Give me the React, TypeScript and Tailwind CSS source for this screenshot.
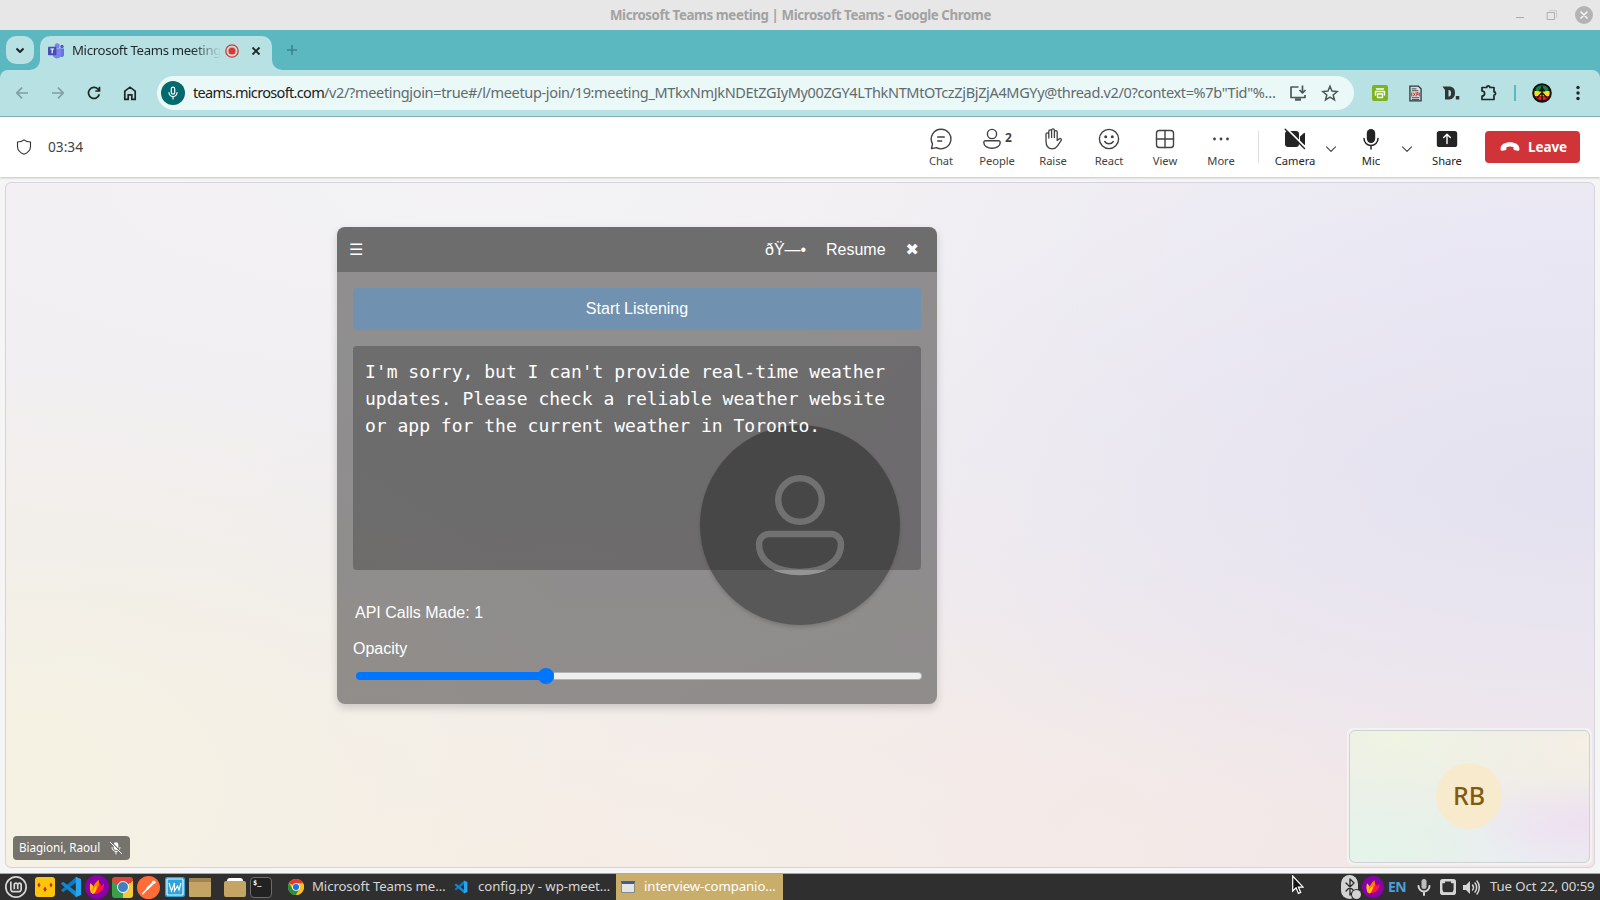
import React from "react";
import { SiLinuxmint } from "react-icons/si";

type Box = { children: React.ReactNode; className?: string; viewBox?: string };

function Svg({ children, className = "w-6 h-6", viewBox = "0 0 24 24" }: Box) {
  return (
    <svg viewBox={viewBox} className={`shrink-0 ${className}`} fill="none" stroke="currentColor" strokeWidth="1.4" strokeLinecap="round" strokeLinejoin="round">
      {children}
    </svg>
  );
}

function Cell({ children, className }: { children?: React.ReactNode; className: string }) {
  return <div className={`flex shrink-0 items-center justify-center ${className}`}>{children}</div>;
}

function ChromeLogo({ className }: { className: string }) {
  return (
    <svg viewBox="0 0 24 24" className={`shrink-0 ${className}`}>
      <circle cx="12" cy="12" r="12" fill="#fbc116" />
      <path d="M12 12 L1.6 6 A12 12 0 0 1 22.4 6 Z" fill="#e33b2e" />
      <path d="M1.6 6 A12 12 0 0 0 12 24 L17.2 15 L12 12 L6.8 15 Z" fill="#229342" />
      <path d="M12 6.5 H22.7 A12 12 0 0 1 12 24 L17 15 Z" fill="#fbc116" />
      <circle cx="12" cy="12" r="5.8" fill="#fff" />
      <circle cx="12" cy="12" r="4.6" fill="#1a73e8" />
    </svg>
  );
}

function CodeLogo({ className }: { className: string }) {
  return (
    <svg viewBox="0 0 24 24" className={`shrink-0 ${className}`}>
      <path d="M17.5 1 L1 15.6 L3.4 17.8 L17.5 7 Z" fill="#0a7bc4" />
      <path d="M17.5 23 L1 8.4 L3.4 6.2 L17.5 17 Z" fill="#0d8ad8" />
      <path d="M17.2 0.8 L23 3.4 V20.6 L17.2 23.2 Z" fill="#27a5f0" />
    </svg>
  );
}

function FlameLogo({ className }: { className: string }) {
  return (
    <svg viewBox="0 0 24 24" className={`shrink-0 ${className}`}>
      <circle cx="12" cy="12" r="12" fill="#8a00a8" />
      <path d="M6 18 C4.500 14 4.500 11 5.500 8 L9 12 L10 18 Z" fill="#ffc400" />
      <path d="M7 18.500 C7 13 9 8 14 4.500 C13.500 8 15.500 9 14 13 L12 18.500 Z" fill="#ff7a00" />
      <path d="M8 19 C12 17 12 12 15.500 8.500 L16 11.500 L19 8.500 C19.500 14 16 19 8 19 Z" fill="#ff1744" />
      <path d="M7 18.500 C8 15 9 13 11.500 10.500 C11.500 14 11 17 8 19 Z" fill="#ffd600" />
    </svg>
  );
}

function TitleBar() {
  return (
    <div className="flex h-[30px] shrink-0 items-center bg-[#e7e7e7]">
      <div className="w-[1512px] pt-px pl-[610px] text-[13.3px] font-bold whitespace-nowrap text-[#a2a2a2]">
        <span className="tracking-[-0.415px]">Microsoft Teams meeting | Microsoft Teams - Google Chrome</span>
      </div>
      <Cell className="h-6 w-4 pt-1">
        <div className="h-px w-2 bg-[#ababab]" />
      </Cell>
      <Cell className="ml-4 h-6 w-4">
        <Svg className="h-3 w-3 text-[#b0b0b0]" viewBox="0 0 12 12">
          <path d="M1.500 3.500h7v7h-7z" strokeWidth="1" />
          <path d="M3.500 1.500h7v7" strokeWidth="1" opacity=".5" />
        </Svg>
      </Cell>
      <Cell className="ml-[15px] h-[18px] w-[18px] rounded-full bg-[#b4b4b4] text-white">
        <Svg className="h-2.5 w-2.5" viewBox="0 0 10 10">
          <path d="M2 2l6 6M8 2l-6 6" />
        </Svg>
      </Cell>
    </div>
  );
}

function TeamsLogo() {
  return (
    <svg viewBox="0 0 16 16" className="h-4 w-4 shrink-0">
      <circle cx="14" cy="3.500" r="1.700" fill="#5059c9" />
      <circle cx="9.200" cy="2.800" r="2.500" fill="#7b83eb" />
      <path d="M11 5.500h5v5.500a2.500 2.500 0 0 1-5 1z" fill="#6a73dd" />
      <path d="M5 5.500h8v6a4.200 4.200 0 0 1-8 1.500z" fill="#7b83eb" />
      <rect x="0" y="3.800" width="8.400" height="8.400" rx="1" fill="#454eb8" />
      <path d="M2.300 6h3.800M4.200 6v4.300" stroke="#fff" strokeWidth="1.200" />
    </svg>
  );
}

function TabStrip() {
  return (
    <div className="flex h-10 shrink-0 items-end bg-[#5bb8c1]">
      <Cell className="mb-[6px] ml-[6px] h-7 w-7 rounded-[10px] bg-[#b8e1e4] text-[#1f2426]">
        <Svg className="h-3 w-3" viewBox="0 0 12 12">
          <path d="M2.500 4.500L6 8l3.500-3.500" strokeWidth="2" strokeLinecap="butt" />
        </Svg>
      </Cell>
      <svg viewBox="0 0 10 10" className="ml-[-4px] h-2.5 w-2.5 shrink-0">
        <path d="M10 0A10 10 0 0 1 0 10h10z" fill="#b8e1e4" />
      </svg>
      <div className="flex h-[34px] w-[232px] items-center rounded-t-[10px] bg-[#b8e1e4] pb-[5px] pl-2">
        <TeamsLogo />
        <div className="ml-2 w-[149px] bg-linear-to-r from-[#202628] from-80% to-[#b8e1e4] bg-clip-text text-[13.200px] tracking-[-0.340px] whitespace-nowrap text-transparent">
          Microsoft Teams meeting
        </div>
        <svg viewBox="0 0 14 14" className="ml-1 h-3.5 w-3.5 shrink-0">
          <circle cx="7" cy="7" r="6.200" fill="none" stroke="#dc362e" strokeWidth="1.300" />
          <circle cx="7" cy="7" r="3.600" fill="#dc362e" />
        </svg>
        <Svg className="ml-[11px] h-3 w-3 text-[#202628]" viewBox="0 0 12 12">
          <path d="M2.500 2.500l7 7M9.500 2.500l-7 7" strokeWidth="1.800" strokeLinecap="butt" />
        </Svg>
      </div>
      <svg viewBox="0 0 10 10" className="h-2.5 w-2.5 shrink-0">
        <path d="M0 0A10 10 0 0 0 10 10H0z" fill="#b8e1e4" />
      </svg>
      <Svg className="mb-[14px] ml-[4px] h-3 w-3 text-[#3d838a]" viewBox="0 0 12 12">
        <path d="M6 1v10M1 6h10" strokeWidth="1.600" strokeLinecap="butt" />
      </Svg>
    </div>
  );
}

function AddressBar() {
  return (
    <div className="shrink-0 bg-[#5bb8c1]">
      <div className="flex h-[47px] items-center rounded-t-[8px] border-b border-[#84afb2] bg-[#b8e1e4] pb-1 pt-1">
        <Svg className="ml-[14px] h-4 w-4 text-[#7d9fa2]" viewBox="0 0 16 16">
          <path d="M14 8H3M8 2.700L2.700 8 8 13.300" strokeWidth="1.700" strokeLinecap="butt" />
        </Svg>
        <Svg className="ml-5 h-4 w-4 text-[#7d9fa2]" viewBox="0 0 16 16">
          <path d="M2 8h11M8 2.700L13.300 8 8 13.300" strokeWidth="1.700" strokeLinecap="butt" />
        </Svg>
        <Svg className="ml-5 h-4 w-4 text-[#202628]" viewBox="0 0 16 16">
          <path d="M13.300 9.300A5.500 5.500 0 1 1 12 4.200L13.500 6M13.500 1.800V6H9.300" strokeWidth="1.700" strokeLinecap="butt" strokeLinejoin="miter" />
        </Svg>
        <Svg className="ml-5 h-4 w-4 text-[#202628]" viewBox="0 0 16 16">
          <path d="M2.800 6.200L8 2.200l5.200 4v8.100H9.800V9.800H6.200v4.500H2.800z" strokeWidth="1.700" strokeLinejoin="miter" />
        </Svg>
        <div className="ml-[19px] flex h-[34px] w-[1197px] items-center rounded-full bg-[#ebf8f8] pl-1">
          <Cell className="h-6 w-6 rounded-full bg-[#006a6f] text-white">
            <Svg className="h-3.5 w-3.5" viewBox="0 0 14 14">
              <rect x="5.300" y="1.200" width="3.400" height="7" rx="1.700" strokeWidth="1.200" />
              <path d="M3 6.500a4 4 0 0 0 8 0M7 10.500V13" strokeWidth="1.200" />
            </Svg>
          </Cell>
          <div className="ml-2 w-[1088px] text-[14.500px] tracking-[-0.350px] whitespace-nowrap text-[#5f6b6d]">
            <span className="tracking-[-0.670px] text-[#1b2021]">teams.microsoft.com</span>
            /v2/?meetingjoin=true#/l/meetup-join/19:meeting_MTkxNmJkNDEtZGIyMy00ZGY4LThkNTMtOTczZjBjZjA4MGYy@thread.v2/0?context=%7b"Tid"%…
          </div>
          <Svg className="ml-2 h-[18px] w-[18px] text-[#4d5759]" viewBox="0 0 18 18">
            <path d="M9.500 3H2v10.500h14V11" strokeWidth="1.700" strokeLinecap="butt" />
            <path d="M6 15.500h6" strokeWidth="2.500" strokeLinecap="butt" />
            <path d="M13.500 1.500v7M10.500 6l3 3 3-3" strokeWidth="1.700" strokeLinecap="butt" />
          </Svg>
          <Svg className="ml-[14px] h-[18px] w-[18px] text-[#4d5759]" viewBox="0 0 18 18">
            <path d="M9 2.200l2 4.900 5.200.4-4 3.400 1.300 5.100L9 13.200 4.500 16l1.300-5.100-4-3.400L7 7.100z" strokeWidth="1.500" strokeLinejoin="miter" />
          </Svg>
        </div>
        <Cell className="ml-[18px] h-4 w-4 rounded-[2px] bg-[#7cb321]">
          <Svg className="h-3 w-3 text-white" viewBox="0 0 12 12">
            <path d="M2.500 2h7M1.500 8V4.500h9V8M3.500 7h5v3.500h-5z" strokeWidth="1.400" />
          </Svg>
        </Cell>
        <svg viewBox="0 0 14 18" className="ml-[21px] h-[17px] w-[13px] shrink-0">
          <path d="M1 1h9l3 3v13H1z" fill="#d5dede" stroke="#2d3638" strokeWidth="1.400" />
          <path d="M3 4h5M3 6h7M3 13.500h8M3 15.500h8M3 8v4M11 8v4" stroke="#2d3638" strokeWidth=".9" />
          <path d="M4.500 8l2.500 4M7 8l-2.500 4M8.300 12V8h1.400v2H8.300" stroke="#e02020" strokeWidth=".9" fill="none" />
        </svg>
        <svg viewBox="0 0 18 16" className="ml-5 h-4 w-[18px] shrink-0">
          <path fillRule="evenodd" d="M0.500 1.500H7c4 0 6 2.400 6 6.300S11 14.500 7 14.500H3V5zM6.500 5v6.500H7c1.300 0 2-1.300 2-3.300S8.300 5 7 5z" fill="#2f3638" />
          <rect x="13.800" y="11" width="3.500" height="3.500" fill="#2f3638" />
        </svg>
        <Svg className="ml-[20px] h-[18px] w-[18px] text-[#202628]" viewBox="0 0 18 18">
          <path d="M2 3.500h4.700a1.600 1.600 0 0 1 3.200 0H14v4.300a1.600 1.600 0 0 1 0 3.200v4.500H2v-3.300a2.600 2.600 0 0 0 0-5.200z" strokeWidth="1.700" />
        </Svg>
        <div className="ml-[16px] h-4 w-0.5 bg-[#5bb8c1]" />
        <svg viewBox="0 0 20 20" className="ml-4 h-5 w-5 shrink-0">
          <circle cx="10" cy="10" r="9.800" fill="#111" />
          <path d="M3.300 6.500a7.500 7.500 0 0 1 13.400 0l-1 1.500H4.300z" fill="#15803d" />
          <path d="M2.500 8h15a8 8 0 0 1-.5 5H3a8 8 0 0 1-.5-5z" fill="#f4e11a" />
          <path d="M3 13h14a7.800 7.800 0 0 1-14 0z" fill="#dc1f1f" />
          <path d="M10 2.500v15M10 9.500l-5 5.500M10 9.500l5 5.500" stroke="#111" strokeWidth="1.400" />
          <path d="M10 3.500l-3.500 5h7z" fill="#111" />
        </svg>
        <svg viewBox="0 0 4 16" className="ml-6 h-4 w-1 shrink-0" fill="#202628">
          <circle cx="2" cy="2.500" r="1.700" />
          <circle cx="2" cy="8" r="1.700" />
          <circle cx="2" cy="13.500" r="1.700" />
        </svg>
      </div>
    </div>
  );
}

function Action({ label, icon, className = "w-14" }: { label: string; icon: React.ReactNode; className?: string }) {
  return (
    <div className={`flex shrink-0 flex-col items-center pt-[2px] ${className}`}>
      <div className="flex h-6 items-center">{icon}</div>
      <div className="mt-[2px] text-[11.200px] leading-[16px] tracking-[-0.050px] whitespace-nowrap">{label}</div>
    </div>
  );
}

function PersonGlyph() {
  return (
    <Svg className="h-6 w-6" viewBox="0 0 24 24">
      <circle cx="12" cy="7" r="4.600" />
      <path d="M5.500 13.700h13a1.700 1.700 0 0 1 1.700 1.700c0 3.400-3.600 5.900-8.200 5.900s-8.200-2.500-8.200-5.900a1.700 1.700 0 0 1 1.700-1.700z" />
    </Svg>
  );
}

function Chevron({ className }: { className: string }) {
  return (
    <Svg className={`h-3 w-3 text-[#424242] ${className}`} viewBox="0 0 12 12">
      <path d="M1.500 3.800L6 8.300l4.500-4.500" strokeWidth="1.100" />
    </Svg>
  );
}

function MeetingBar() {
  return (
    <div className="z-10 flex h-[60px] shrink-0 items-center bg-white text-[#424242] shadow-[0_1px_2px_rgba(0,0,0,0.2)]">
      <Svg className="ml-4 h-4 w-4 text-[#303030]" viewBox="0 0 16 16">
        <path d="M8 .8c1.800 1.500 4 2.200 6.500 2.200v4.500c0 4-2.500 6.300-6.500 7.800-4-1.500-6.500-3.800-6.500-7.800V3C4 3 6.200 2.300 8 .8z" strokeWidth="1.100" />
      </Svg>
      <div className="ml-4 w-[865px] text-[13.700px] text-[#424242]">03:34</div>
      <Action
        label="Chat"
        icon={
          <Svg>
            <path d="M12 2.200a9.800 9.800 0 1 1-4.600 18.400L2.500 21.600l1-4.800A9.800 9.800 0 0 1 12 2.200zM8.700 10h6.600M8.700 14h4" />
          </Svg>
        }
      />
      <Action
        label="People"
        icon={
          <div className="-ml-0.5 flex items-center">
            <PersonGlyph />
            <span className="-mt-0.5 ml-px text-[12px] font-bold">2</span>
          </div>
        }
      />
      <Action
        label="Raise"
        icon={
          <Svg>
            <path d="M5 14V7.200a1.400 1.400 0 0 1 2.800 0V11 4.300a1.400 1.400 0 0 1 2.800 0V10.500 3.200a1.400 1.400 0 0 1 2.800 0v7.300V5a1.400 1.400 0 0 1 2.800 0v8.500l2.200-1.700c1.200-.9 2.600.5 1.700 1.800l-3.800 5.600c-1.200 1.800-2.800 2.600-5 2.600C7.500 21.800 5 19 5 14z" strokeWidth="1.300" />
          </Svg>
        }
      />
      <Action
        label="React"
        icon={
          <Svg>
            <circle cx="12" cy="12" r="9.600" />
            <path d="M7.700 14.500c2 3 6.600 3 8.600 0" />
            <circle cx="8.700" cy="9.800" r=".8" fill="currentColor" />
            <circle cx="15.300" cy="9.800" r=".8" fill="currentColor" />
          </Svg>
        }
      />
      <Action
        label="View"
        icon={
          <Svg>
            <rect x="3.500" y="3.500" width="17" height="17" rx="2.800" />
            <path d="M12 3.500v17M3.500 12h17" />
          </Svg>
        }
      />
      <Action
        label="More"
        icon={
          <Svg>
            <path d="M5.500 12h.01M12 12h.01M18.500 12h.01" strokeWidth="2.800" />
          </Svg>
        }
      />
      <div className="ml-[9px] h-8 w-px bg-[#dedede]" />
      <div className="flex items-center text-[#242424]">
        <Action
          className="ml-[12px] w-12"
          label="Camera"
          icon={
            <Svg>
              <rect x="2" y="4" width="14" height="16" rx="3" fill="currentColor" stroke="none" />
              <path d="M17 9.500l4-3.500a.6.6 0 0 1 1 .4v11.200a.6.6 0 0 1-1 .4l-4-3.500z" fill="currentColor" stroke="none" />
              <path d="M3.500 1.500L23 21" stroke="#fff" strokeWidth="1.800" />
              <path d="M2.200 2.200L21.500 21.500" />
            </Svg>
          }
        />
        <Chevron className="mt-1 ml-[6px]" />
        <Action
          className="ml-[10px] w-12"
          label="Mic"
          icon={
            <Svg>
              <rect x="7.800" y="2" width="8.400" height="14" rx="4.200" fill="currentColor" stroke="none" />
              <path d="M5 11.500a7 7 0 0 0 14 0M12 18.500V22" strokeWidth="1.500" />
            </Svg>
          }
        />
        <Chevron className="mt-1 ml-[6px]" />
        <Action
          className="ml-[10px] w-12"
          label="Share"
          icon={
            <Svg>
              <rect x="1.800" y="4" width="20.400" height="16" rx="2.600" fill="currentColor" stroke="none" />
              <path d="M12 16.500v-9M8.700 10.500L12 7.200l3.300 3.300" stroke="#fff" />
            </Svg>
          }
        />
      </div>
      <div className="ml-[14px] flex h-8 w-[95px] items-center rounded-[4px] bg-[#d13438] pl-[15px] text-white">
        <svg viewBox="0 0 20 12" className="h-3 w-5 shrink-0" fill="currentColor">
          <path d="M10 1.200c5 0 9.200 2.200 9.400 6.200.1 1.600-.4 2.400-1.500 2.300l-3-.5c-.9-.2-1.300-.7-1.400-1.700l-.1-1.400c-2.200-.8-4.600-.8-6.800 0l-.1 1.400c-.1 1-.5 1.500-1.400 1.700l-3 .5C1 9.800.5 9 .6 7.400.8 3.400 5 1.200 10 1.200z" />
        </svg>
        <span className="ml-2 text-[13.500px] font-bold tracking-[-0.100px]">Leave</span>
      </div>
    </div>
  );
}

function RemoteAvatar() {
  return (
    <div className="absolute top-[242px] left-[694px] flex h-[200px] w-[200px] items-center justify-center rounded-full bg-[#696969] text-white shadow-[0_2px_4px_rgba(0,0,0,0.25)]">
      <svg viewBox="0 0 100 112" className="h-28 w-[100px]" fill="none" stroke="currentColor" strokeWidth="6.400">
        <circle cx="50" cy="31" r="21.800" />
        <path d="M19 65h62a10 10 0 0 1 10 10c0 18-17 28-41 28S9 93 9 75a10 10 0 0 1 10-10z" />
      </svg>
    </div>
  );
}

function Companion() {
  return (
    <div className="absolute top-[44px] left-[331px] flex h-[477px] w-[600px] flex-col overflow-hidden rounded-[8px] bg-[rgba(78,77,77,0.6)] font-['Liberation_Sans',Arial,sans-serif] text-[16px] text-white shadow-[0_4px_8px_rgba(0,0,0,0.16)]">
      <div className="flex h-[45px] shrink-0 items-center bg-[rgba(33,33,33,0.3)] pl-3">
        <span className="w-[416px] font-['DejaVu_Sans',sans-serif]">☰</span>
        <span className="w-[61px]">ðŸ—•</span>
        <span className="w-[79.500px]">Resume</span>
        <span className="font-['DejaVu_Sans',sans-serif]">✖</span>
      </div>
      <div className="flex flex-col px-4 pt-4">
        <div className="flex h-[42px] items-center justify-center rounded-[4px] bg-[#7092b0]">Start Listening</div>
        <div className="mt-4 h-56 rounded-[4px] bg-[rgba(33,33,33,0.3)] p-3 font-['DejaVu_Sans_Mono',monospace] text-[18px] leading-[27px] whitespace-pre">
          {"I'm sorry, but I can't provide real-time weather\nupdates. Please check a reliable weather website\nor app for the current weather in Toronto."}
        </div>
        <div className="mt-[34px] ml-0.5 leading-[18px]">API Calls Made: 1</div>
        <div className="mt-[18px] leading-[18px]">Opacity</div>
        <div className="mt-[10px] ml-[3px] flex h-4 w-[566px] items-center">
          <div className="h-2 w-[183px] rounded-l-full bg-[#0075ff]" />
          <div className="-ml-px h-4 w-4 rounded-full bg-[#0075ff]" />
          <div className="h-2 flex-1 rounded-r-full border border-l-0 border-[#b2b2b2] bg-[#efefef]" />
        </div>
      </div>
    </div>
  );
}

function Stage() {
  return (
    <div className="relative mx-[5px] mt-[5px] h-[686px] shrink-0 rounded-[6px] border border-[#d8d4dc] bg-[#f0ecef] bg-[radial-gradient(ellipse_50%_50%_at_100%_45%,#e4e1f0_0%,rgba(228,225,240,0)_100%),radial-gradient(ellipse_50%_50%_at_100%_12%,#eae9f5_0%,rgba(234,233,245,0)_100%),radial-gradient(ellipse_40%_60%_at_0%_88%,#f5f2e2_0%,rgba(245,242,226,0)_100%),radial-gradient(ellipse_70%_50%_at_35%_100%,#f5ede5_0%,rgba(245,237,229,0)_100%),radial-gradient(ellipse_60%_50%_at_88%_100%,#f2e4e8_0%,rgba(242,228,232,0)_100%),radial-gradient(ellipse_80%_60%_at_30%_0%,#f3f2f4_0%,rgba(243,242,244,0)_100%)]">
      <RemoteAvatar />
      <Companion />
      <div className="absolute bottom-[7px] left-[7px] flex h-6 w-[117px] items-center rounded-[4px] bg-[#75736b] pl-1.5 text-[11.700px] text-white">
        <span className="w-[90px] tracking-[-0.060px] whitespace-nowrap">Biagioni, Raoul</span>
        <Svg className="h-3.5 w-3.5" viewBox="0 0 14 14">
          <rect x="4.700" y="1.200" width="4.600" height="7.800" rx="2.300" fill="currentColor" stroke="none" />
          <path d="M3 6.500a4 4 0 0 0 8 0M7 10.500V13" strokeWidth="1" />
          <path d="M2 1l11 11" stroke="#75736b" strokeWidth="1.300" />
          <path d="M1.200 1.200l11.500 11.500" strokeWidth="1" />
        </Svg>
      </div>
      <div className="absolute right-[2px] bottom-[2px] flex h-[137px] w-[245px] rounded-[6px] bg-[#f3f2f3] p-0.5">
        <div className="flex flex-1 items-center justify-center rounded-[6px] border border-[#cfd2d2] bg-[#ebecea] bg-[radial-gradient(ellipse_at_20%_0%,#eff4e2_0%,rgba(239,244,226,0)_55%),radial-gradient(ellipse_at_100%_70%,#eee0f1_0%,rgba(238,224,241,0)_35%),radial-gradient(ellipse_at_100%_10%,#f5efe4_0%,rgba(245,239,228,0)_55%),radial-gradient(ellipse_at_10%_90%,#e4f4ea_0%,rgba(228,244,234,0)_55%),radial-gradient(ellipse_at_75%_100%,#ebebf4_0%,rgba(235,235,244,0)_55%)] pr-px pb-0.5">
          <Cell className="h-[66px] w-[66px] rounded-full bg-[#f8eacd] text-[25px] font-medium tracking-[-0.100px] text-[#835b10]">
            <span>RB</span>
          </Cell>
        </div>
      </div>
    </div>
  );
}

function Taskbar() {
  return (
    <div className="flex h-[26px] shrink-0 items-center bg-[#2f2f2f] text-[13.200px] whitespace-nowrap text-[#d6d6d6]">
      <SiLinuxmint className="ml-[5px] h-[22px] w-[22px] shrink-0" />
      <svg viewBox="0 0 20 20" className="ml-2 h-5 w-5 shrink-0">
        <rect width="20" height="20" rx="3" fill="#fdc60a" />
        <path d="M4 5.500l1.600 2.500L4 10.500 2.400 8zM10 9.500l1.800 2.700-1.800 2.800-1.800-2.800zM16 5.500l1.600 2.500-1.600 2.500L14.400 8z" fill="#d6261c" />
      </svg>
      <CodeLogo className="ml-[5px] h-[22px] w-[22px]" />
      <FlameLogo className="ml-[3px] h-6 w-6" />
      <Cell className="ml-[3px] h-[21px] w-[21px] rounded-[3px] bg-[conic-gradient(from_300deg,#e0473a_0_33%,#f5c93c_0_66%,#3a9e4b_0)]">
        <div className="h-3 w-3 rounded-full border-[1.500px] border-white bg-[#3f7fc4]" />
      </Cell>
      <svg viewBox="0 0 24 24" className="ml-[4px] h-[23px] w-[23px] shrink-0">
        <circle cx="12" cy="12" r="12" fill="#ff6c37" />
        <path d="M6 18.500L14 10" stroke="#fff" strokeWidth="1.600" strokeLinecap="round" />
        <path d="M9.500 12.500l6-5.500 1.700 1.700-6 5.800z" fill="#fff" />
        <circle cx="17.500" cy="6.500" r="1.900" fill="#fff" />
      </svg>
      <svg viewBox="0 0 20 20" className="ml-[5px] h-5 w-5 shrink-0">
        <rect width="20" height="20" rx="2.500" fill="#2ca5dd" />
        <rect x="2" y="2" width="16" height="16" rx="1" fill="none" stroke="#e6f5fc" strokeWidth="1.200" />
        <path d="M4 6l2.500 8 3-8v8l3-5 1.500 4 2-7" fill="none" stroke="#fff" strokeWidth="1.100" />
      </svg>
      <div className="ml-[4px] flex h-[19px] w-[22px] flex-col rounded-[1px] bg-[#c4a565]">
        <div className="h-1 bg-[#a08550]" />
      </div>
      <div className="ml-[13px] flex h-[19px] w-[22px] flex-col">
        <div className="ml-[3px] h-[3px] w-4 rounded-t-sm bg-white" />
        <div className="flex-1 rounded-[2px] bg-[#c4a565]" />
      </div>
      <div className="ml-[4px] h-[21px] w-[22px] rounded-[4px] border border-[#6b6b6b] bg-[#222] pl-[2px] font-['DejaVu_Sans_Mono',monospace] text-[7px] leading-[11px] font-bold text-white">$_</div>
      <ChromeLogo className="ml-[16px] h-4 w-4" />
      <span className="ml-2 w-[142px] tracking-[-0.100px]">Microsoft Teams me…</span>
      <CodeLogo className="h-3.5 w-3.5" />
      <span className="ml-[10px] w-[138px] tracking-[-0.030px]">config.py - wp-meet…</span>
      <div className="flex h-full w-[167px] items-center bg-[#c8ad6b] pl-[5px] text-white">
        <div className="h-3 w-3.5 shrink-0 border border-t-[3px] border-[#8a8a8a] border-t-[#34609c] bg-[#e4e4e0]" />
        <span className="ml-[9px] tracking-[-0.080px]">interview-companio…</span>
      </div>
      <Cell className="ml-[558px] h-[24px] w-[17px] rounded-full bg-[#d3d3d3] text-[#2f2f2f]">
        <div className="relative">
          <Svg className="h-[18px] w-3" viewBox="0 0 12 18">
            <path d="M2 5l8 8-4 4V1l4 4-8 8" />
          </Svg>
          <div className="absolute -right-[5px] -bottom-[3px] h-[9px] w-[9px] rounded-full bg-[#d3d3d3] ring-1 ring-[#2f2f2f]" />
        </div>
      </Cell>
      <FlameLogo className="ml-[4px] h-6 w-[22px]" />
      <span className="ml-[4px] w-[29px] text-[14px] leading-[20px] font-bold tracking-[-0.700px] text-[#4d9fdb]">EN</span>
      <Svg className="h-[18px] w-3.5 text-[#d6d6d6]" viewBox="0 0 14 18">
        <rect x="4.500" y="1" width="5" height="10" rx="2.500" fill="#bdbdbd" stroke="none" />
        <path d="M1.500 8a5.500 5.500 0 0 0 11 0M7 13.500V17" strokeWidth="2" />
      </Svg>
      <Svg className="ml-[9px] h-4 w-4" viewBox="0 0 16 16">
        <rect x="1.200" y="1.200" width="13.600" height="13.600" rx="1.500" strokeWidth="2.400" />
        <path d="M2 12.500v2h12v-2M2 3h2M12 3h2" strokeWidth="2.400" />
      </Svg>
      <Svg className="ml-[7px] h-[17px] w-[17px]" viewBox="0 0 17 17">
        <path d="M0 6h3l4-4v13l-4-4H0z" fill="currentColor" stroke="none" />
        <path d="M9.500 6c1.200 1.500 1.200 3.500 0 5M12 4c2.200 2.500 2.200 6.500 0 9M14 2c3 3.500 3 9.500 0 13" strokeWidth="1.500" />
      </Svg>
      <span className="ml-[10px] tracking-[-0.100px]">Tue Oct 22, 00:59</span>
    </div>
  );
}

export default function App() {
  return (
    <div className="relative flex h-[900px] w-[1600px] flex-col overflow-hidden bg-[#f5f5f5] font-['Noto_Sans','Open_Sans',sans-serif]">
      <TitleBar />
      <TabStrip />
      <AddressBar />
      <MeetingBar />
      <Stage />
      <div className="min-h-0 flex-1 border-b border-[#a9a9a9]" />
      <Taskbar />
      <svg viewBox="0 0 12 20" className="absolute top-[875px] left-[1292px] h-5 w-3">
        <path d="M.7 1v15l3.400-3.200 2.300 5.600 2.300-1-2.300-5.300h4.700z" fill="#111" stroke="#fff" strokeWidth="1.200" />
      </svg>
    </div>
  );
}
